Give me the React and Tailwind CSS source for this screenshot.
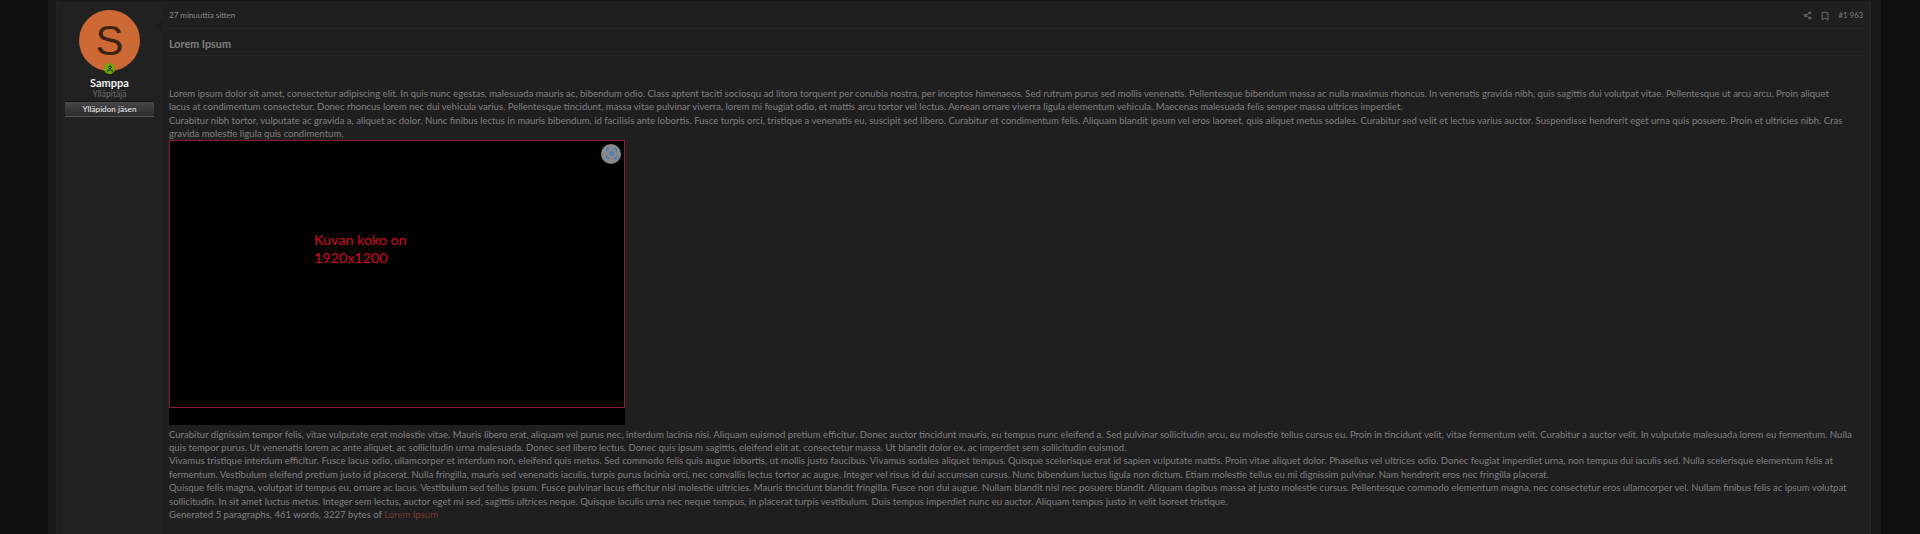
import { Bookmark, Focus, Share2, User } from 'lucide-react'

const para1 = [
  'Lorem ipsum dolor sit amet, consectetur adipiscing elit. In quis nunc egestas, malesuada mauris ac, bibendum odio. Class aptent taciti sociosqu ad litora torquent per conubia nostra, per inceptos himenaeos. Sed rutrum purus sed mollis venenatis. Pellentesque bibendum massa ac nulla maximus rhoncus. In venenatis gravida nibh, quis sagittis dui volutpat vitae. Pellentesque ut arcu arcu. Proin aliquet',
  'lacus at condimentum consectetur. Donec rhoncus lorem nec dui vehicula varius. Pellentesque tincidunt, massa vitae pulvinar viverra, lorem mi feugiat odio, et mattis arcu tortor vel lectus. Aenean ornare viverra ligula elementum vehicula. Maecenas malesuada felis semper massa ultrices imperdiet.',
  'Curabitur nibh tortor, vulputate ac gravida a, aliquet ac dolor. Nunc finibus lectus in mauris bibendum, id facilisis ante lobortis. Fusce turpis orci, tristique a venenatis eu, suscipit sed libero. Curabitur et condimentum felis. Aliquam blandit ipsum vel eros laoreet, quis aliquet metus sodales. Curabitur sed velit et lectus varius auctor. Suspendisse hendrerit eget urna quis posuere. Proin et ultricies nibh. Cras',
  'gravida molestie ligula quis condimentum.',
]

const para2 = [
  'Curabitur dignissim tempor felis, vitae vulputate erat molestie vitae. Mauris libero erat, aliquam vel purus nec, interdum lacinia nisi. Aliquam euismod pretium efficitur. Donec auctor tincidunt mauris, eu tempus nunc eleifend a. Sed pulvinar sollicitudin arcu, eu molestie tellus cursus eu. Proin in tincidunt velit, vitae fermentum velit. Curabitur a auctor velit. In vulputate malesuada lorem eu fermentum. Nulla',
  'quis tempor purus. Ut venenatis lorem ac ante aliquet, ac sollicitudin urna malesuada. Donec sed libero lectus. Donec quis ipsum sagittis, eleifend elit at, consectetur massa. Ut blandit dolor ex, ac imperdiet sem sollicitudin euismod.',
  'Vivamus tristique interdum efficitur. Fusce lacus odio, ullamcorper et interdum non, eleifend quis metus. Sed commodo felis quis augue lobortis, ut mollis justo faucibus. Vivamus sodales aliquet tempus. Quisque scelerisque erat id sapien vulputate mattis. Proin vitae aliquet dolor. Phasellus vel ultrices odio. Donec feugiat imperdiet urna, non tempus dui iaculis sed. Nulla scelerisque elementum felis at',
  'fermentum. Vestibulum eleifend pretium justo id placerat. Nulla fringilla, mauris sed venenatis iaculis, turpis purus lacinia orci, nec convallis lectus tortor ac augue. Integer vel risus id dui accumsan cursus. Nunc bibendum luctus ligula non dictum. Etiam molestie tellus eu mi dignissim pulvinar. Nam hendrerit eros nec fringilla placerat.',
  'Quisque felis magna, volutpat id tempus eu, ornare ac lacus. Vestibulum sed tellus ipsum. Fusce pulvinar lacus efficitur nisl molestie ultricies. Mauris tincidunt blandit fringilla. Fusce non dui augue. Nullam blandit nisl nec posuere blandit. Aliquam dapibus massa at justo molestie cursus. Pellentesque commodo elementum magna, nec consectetur eros ullamcorper vel. Nullam finibus felis ac ipsum volutpat',
  'sollicitudin. In sit amet luctus metus. Integer sem lectus, auctor eget mi sed, sagittis ultrices neque. Quisque iaculis urna nec neque tempus, in placerat turpis vestibulum. Duis tempus imperdiet nunc eu auctor. Aliquam tempus justo in velit laoreet tristique.',
]

function Lines({ lines }) {
  return lines.map((line, i) => (
    <div key={i} className="whitespace-nowrap">{line}</div>
  ))
}

const UserPanel = () => (
  <div className="flex w-[105px] shrink-0 flex-col items-center bg-[#212121] pt-[7px]">
    <div className="relative flex h-[61px] w-[61px] items-center justify-center rounded-full bg-[#cc6935] font-['Liberation_Sans',sans-serif] text-[42px] leading-none text-[#3c2212]">
      S
      <div className="absolute bottom-[-3px] left-[25px] flex h-[11px] w-[11px] items-center justify-center rounded-full bg-[#6fa80b] text-[#1d2a05]">
        <User size={8} strokeWidth={3} />
      </div>
    </div>
    <div className="mt-[5px] text-[11px] font-bold leading-[13px] text-[#f2f2f2]">Samppa</div>
    <div className="mt-[-1px] text-[8.5px] leading-[12px] text-[#6e6e6e]">Ylläpitäjä</div>
    <div className="mt-[1px] w-[89px] border-t border-t-[#151515] border-b border-b-[#555555] bg-gradient-to-b from-[#474747] to-[#2c2c2c] text-center text-[8.2px] leading-[14px] text-[#f0f0f0]">
      Ylläpidon jäsen
    </div>
  </div>
)

const App = () => {
  return (
    <div className="h-[534px] overflow-hidden bg-[#0f0f0f] pl-[48px] pr-[39px] font-['Lato','Open_Sans',sans-serif]">
      <div className="h-full bg-[#191919] pl-[8px] pr-[10px] pt-[2px]">
        <div className="flex h-full border border-[#252525] border-b-0">
          <UserPanel />
          <div className="relative min-w-0 flex-1 bg-[#1f1f1f] pl-[7px] pr-[7px] text-[9.55px] leading-[13.4px] text-[#808080]">
            {/* arrow pointing at the user panel */}
            <div className="absolute left-[-7px] top-[17px] h-0 w-0 border-y-[6px] border-r-[7px] border-y-transparent border-r-[#1c1c1c]" />
            <div className="flex h-[26px] items-center justify-between border-b border-[#272727] text-[8px] text-[#8c8c8c]">
              <span>27 minuuttia sitten</span>
              <div className="flex items-center text-[#808080]">
                <Share2 size={9} className="mr-[8px]" />
                <Bookmark size={10} className="mr-[8px]" />
                <span className="text-[7.8px]">#1 963</span>
              </div>
            </div>
            <div className="flex h-[27px] items-center border-b border-[#272727] pt-[3px] text-[10.8px] font-bold text-[#7e7e7e]">
              Lorem Ipsum
            </div>
            <div className="mt-[31px]">
              <Lines lines={para1} />
            </div>
            <div className="relative mt-[-1px] h-[285px] w-[456px] bg-black">
              <div className="h-[268px] border border-[#8f1c2b] pl-[144px] pt-[90px] text-[14.3px] leading-[18.5px] text-[#d8061f]">
                <div>Kuvan koko on</div>
                <div>1920x1200</div>
              </div>
              <div className="absolute right-[4px] top-[4px] flex h-[20px] w-[20px] items-center justify-center rounded-full bg-[#8a8a8a] text-[#2b7bd0]">
                <Focus size={13} strokeWidth={2.2} />
              </div>
            </div>
            <div className="mt-[3px]">
              <Lines lines={para2} />
              <div>
                Generated 5 paragraphs, 461 words, 3227 bytes of <span className="text-[#7a3535]">Lorem Ipsum</span>
              </div>
            </div>
          </div>
        </div>
      </div>
    </div>
  )
}

export default App
